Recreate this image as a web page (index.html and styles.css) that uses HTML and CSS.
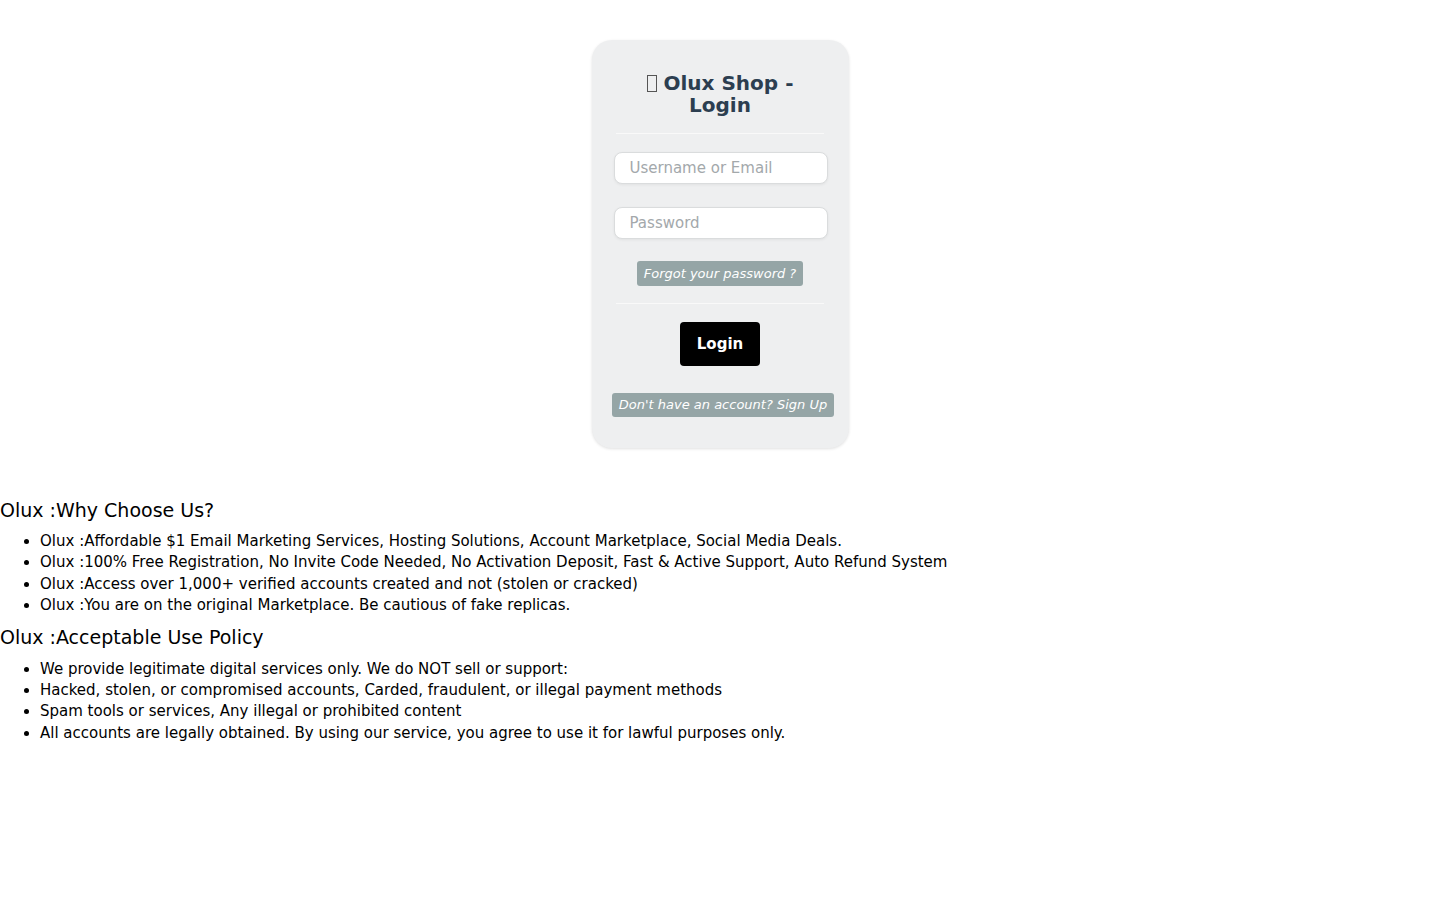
FILE: index.html
```html
<!DOCTYPE html>
<html lang="en">
<head>
<meta charset="utf-8">
<title>Olux Shop - Login</title>
<link rel="stylesheet" href="styles.css">
</head>
<body>
<div class="card">
  <h2 class="title"><span class="tofu"></span> Olux Shop -<br>Login</h2>
  <hr class="sep">
  <input class="field" type="text" placeholder="Username or Email">
  <input class="field field-second" type="password" placeholder="Password">
  <div class="center"><a class="tag forgot" href="#">Forgot your password ?</a></div>
  <hr class="sep sep-second">
  <div class="center"><button class="login">Login</button></div>
  <div class="center"><a class="tag signup" href="#">Don't have an account? Sign Up</a></div>
</div>
<div class="info">
  <h3 class="info-title">Olux :Why Choose Us?</h3>
  <ul class="info-list">
    <li>Olux :Affordable $1 Email Marketing Services, Hosting Solutions, Account Marketplace, Social Media Deals.</li>
    <li>Olux :100% Free Registration, No Invite Code Needed, No Activation Deposit, Fast &amp; Active Support, Auto Refund System</li>
    <li>Olux :Access over 1,000+ verified accounts created and not (stolen or cracked)</li>
    <li>Olux :You are on the original Marketplace. Be cautious of fake replicas.</li>
  </ul>
  <h3 class="info-title second">Olux :Acceptable Use Policy</h3>
  <ul class="info-list info-list-second">
    <li>We provide legitimate digital services only. We do NOT sell or support:</li>
    <li>Hacked, stolen, or compromised accounts, Carded, fraudulent, or illegal payment methods</li>
    <li>Spam tools or services, Any illegal or prohibited content</li>
    <li>All accounts are legally obtained. By using our service, you agree to use it for lawful purposes only.</li>
  </ul>
</div>
</body>
</html>
```
FILE: styles.css
```css
html, body {
  margin: 0;
  padding: 0;
  background: #ffffff;
  font-family: "DejaVu Sans", sans-serif;
  color: #000;
}
.card {
  box-sizing: border-box;
  width: 257px;
  margin: 40px auto 0;
  padding: 32px 21px 31px;
  background: #eeeff0;
  border-radius: 20px;
  box-shadow: 0 1px 3px rgba(0,0,0,0.12);
  display: flex;
  flex-direction: column;
}
.title {
  margin: 0;
  font-size: 20px;
  line-height: 22px;
  font-weight: bold;
  color: #2c3e50;
  text-align: center;
}
.tofu {
  display: inline-block;
  box-sizing: border-box;
  width: 10px;
  height: 17px;
  border: 1.5px solid #555;
  vertical-align: -2px;
}
.sep {
  align-self: center;
  width: 208px;
  margin: 17px 0 0;
  border: 0;
  border-top: 1px solid #f9f9f9;
  height: 0;
}
.sep-second {
  margin-top: 17px;
}
.field {
  box-sizing: border-box;
  width: 214px;
  height: 32px;
  margin: 18px 0 0 1px;
  padding: 0 15px;
  border: 1px solid #dadcdd;
  border-radius: 8px;
  background: #fff;
  font-family: "DejaVu Sans", sans-serif;
  font-size: 15px;
  color: #333;
  box-shadow: 0 1px 3px rgba(0,0,0,0.06);
  outline: none;
}
.field::placeholder {
  color: #a3a8ab;
}
.field-second {
  margin-top: 23px;
}
.center {
  display: flex;
  justify-content: center;
}
.tag {
  display: inline-block;
  background: #95a5a6;
  color: #fff;
  font-style: italic;
  font-size: 13px;
  text-decoration: none;
  border-radius: 3px;
  white-space: nowrap;
}
.forgot {
  margin-top: 22px;
  padding: 4px 7px;
  line-height: 17px;
}
.login {
  margin-top: 18px;
  width: 80px;
  height: 44px;
  background: #000;
  color: #fff;
  border: 0;
  border-radius: 4px;
  font-family: "DejaVu Sans", sans-serif;
  font-size: 15px;
  font-weight: bold;
}
.signup {
  margin-top: 27px;
  padding: 3px 7px;
  line-height: 18px;
  margin-left: 3px;
  margin-right: -3px;
}
.info {
  margin-top: 50px;
}
.info-title {
  margin: 0;
  font-size: 19px;
  line-height: 24px;
  font-weight: normal;
}
.info-title.second {
  margin-top: 8px;
}
.info-list {
  margin: 9px 0 0;
  padding-left: 40px;
  font-size: 15px;
  line-height: 21.4px;
}
.info-list-second {
  margin-top: 10px;
}
```
